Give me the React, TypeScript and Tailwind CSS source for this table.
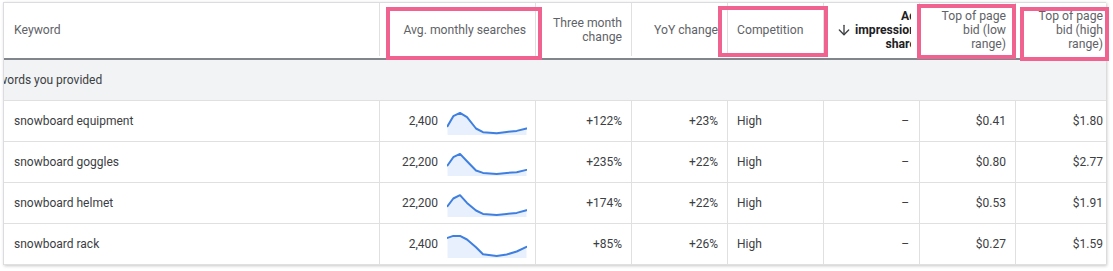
import React from "react";
import { ArrowDown } from "lucide-react";

type Row = {
  kw: string;
  avg: string;
  three: string;
  yoy: string;
  comp: string;
  low: string;
  high: string;
  spark: number[];
};

const X = [0.5, 6.3, 13, 20, 29, 36, 49.7, 59.7, 69.7, 79.5];

const rows: Row[] = [
  {
    kw: "snowboard equipment",
    avg: "2,400",
    three: "+122%",
    yoy: "+23%",
    comp: "High",
    low: "$0.41",
    high: "$1.80",
    spark: [14, 4, 0.7, 5, 16.3, 20, 21, 19.7, 18.7, 16.3],
  },
  {
    kw: "snowboard goggles",
    avg: "22,200",
    three: "+235%",
    yoy: "+22%",
    comp: "High",
    low: "$0.80",
    high: "$2.77",
    spark: [12.3, 4, 0.7, 8, 17.3, 19.7, 20.7, 19.7, 19, 16.7],
  },
  {
    kw: "snowboard helmet",
    avg: "22,200",
    three: "+174%",
    yoy: "+22%",
    comp: "High",
    low: "$0.53",
    high: "$1.91",
    spark: [12, 4.3, 1, 8.7, 16.3, 19.7, 20.7, 19.7, 18.7, 16],
  },
  {
    kw: "snowboard rack",
    avg: "2,400",
    three: "+85%",
    yoy: "+26%",
    comp: "High",
    low: "$0.27",
    high: "$1.59",
    spark: [2.7, 0.7, 0.7, 4.3, 12, 19, 20.7, 19.3, 16.3, 11.7],
  },
];

function Spark({ ys }: { ys: number[] }) {
  const pts = ys.map((y, i) => `${X[i]},${(y + 1.2).toFixed(1)}`);
  const line = "M" + pts.join(" L");
  const area = `${line} L${X[X.length - 1]},24 L${X[0]},24 Z`;
  return (
    <svg width="80" height="24" viewBox="0 0 80 24" className="shrink-0 mt-[3px]">
      <path d={area} fill="#e8f0fe" />
      <path d={line} fill="none" stroke="#3f7fe0" strokeWidth="2" strokeLinejoin="round" strokeLinecap="round" />
    </svg>
  );
}

const cols = "grid grid-cols-[376px_156px_96px_96px_96px_96px_96px_96px]";

export default function App() {
  return (
    <div
      className="relative w-[1113px] h-[271px] bg-white pt-[2px] pl-[3px] text-[12px] text-[#3c4043]"
      style={{ fontFamily: "Roboto, 'Noto Sans', Arial, sans-serif" }}
    >
      <div className="w-[1103px] overflow-hidden border-t border-l border-[#dadce0] shadow-[1px_1px_3px_rgba(0,0,0,0.22)]">
        <div className="w-[1108px]">
          {/* Header */}
          <div className={`${cols} h-[57px] pb-[2px] border-b-2 border-[#80868b] text-[12.2px] text-[#5f6368] leading-[14px]`}>
            <div className="flex items-center pl-[10px] border-r border-[#e0e0e0]">Keyword</div>
            <div className="flex items-center justify-end pr-[9px] border-r border-[#e0e0e0]">Avg. monthly searches</div>
            <div className="flex items-center justify-end pr-[9px] text-right border-r border-[#e0e0e0]">
              <span>
                Three month
                <br />
                change
              </span>
            </div>
            <div className="flex items-center justify-end pr-[9px] border-r border-[#e0e0e0]">YoY change</div>
            <div className="flex items-center pl-[9px] border-r border-[#e0e0e0]">Competition</div>
            <div className="flex items-center pl-[12px] pr-[8px] border-r border-[#e0e0e0]">
              <div className="flex items-center overflow-hidden w-full">
                <ArrowDown size={16} strokeWidth={2} className="shrink-0 text-[#3c4043]" />
                <span className="shrink-0 ml-[3px] text-right font-bold text-[#202124]">
                  Ad
                  <br />
                  impression
                  <br />
                  share
                </span>
              </div>
            </div>
            <div className="flex items-center justify-end pr-[9px] text-right border-r border-[#e0e0e0]">
              <span>
                Top of page
                <br />
                bid (low
                <br />
                range)
              </span>
            </div>
            <div className="flex items-center justify-end pr-[9px] text-right">
              <span>
                Top of page
                <br />
                bid (high
                <br />
                range)
              </span>
            </div>
          </div>

          {/* Group row */}
          <div className="h-[41px] bg-[#f1f3f4] border-b border-[#e0e0e0] flex items-center overflow-hidden">
            <span className="ml-[-25px] whitespace-nowrap">Keywords you provided</span>
          </div>

          {/* Rows */}
          {rows.map((r) => (
            <div key={r.kw} className={`${cols} h-[41px] border-b border-[#e0e0e0]`}>
              <div className="flex items-center pl-[10px] border-r border-[#e0e0e0]">{r.kw}</div>
              <div className="flex items-center justify-end gap-[9px] pr-[8px] border-r border-[#e0e0e0]">
                <span>{r.avg}</span>
                <Spark ys={r.spark} />
              </div>
              <div className="flex items-center justify-end pr-[9px] border-r border-[#e0e0e0]">{r.three}</div>
              <div className="flex items-center justify-end pr-[9px] border-r border-[#e0e0e0]">{r.yoy}</div>
              <div className="flex items-center pl-[9px] border-r border-[#e0e0e0]">{r.comp}</div>
              <div className="flex items-center justify-end pr-[10px] border-r border-[#e0e0e0]">–</div>
              <div className="flex items-center justify-end pr-[9px] border-r border-[#e0e0e0]">{r.low}</div>
              <div className="flex items-center justify-end pr-[9px]">{r.high}</div>
            </div>
          ))}
        </div>
      </div>

      {/* Highlight annotations */}
      <div className="absolute left-[386px] top-[7px] w-[156px] h-[53px] border-[4px] border-[#f0628f]" />
      <div className="absolute left-[718px] top-[6px] w-[110px] h-[51px] border-[4px] border-[#f0628f]" />
      <div className="absolute left-[917px] top-[4px] w-[99px] h-[55px] border-[4px] border-[#f0628f]" />
      <div className="absolute left-[1020px] top-[7px] w-[89px] h-[54px] border-[4px] border-[#f0628f]" />
    </div>
  );
}
